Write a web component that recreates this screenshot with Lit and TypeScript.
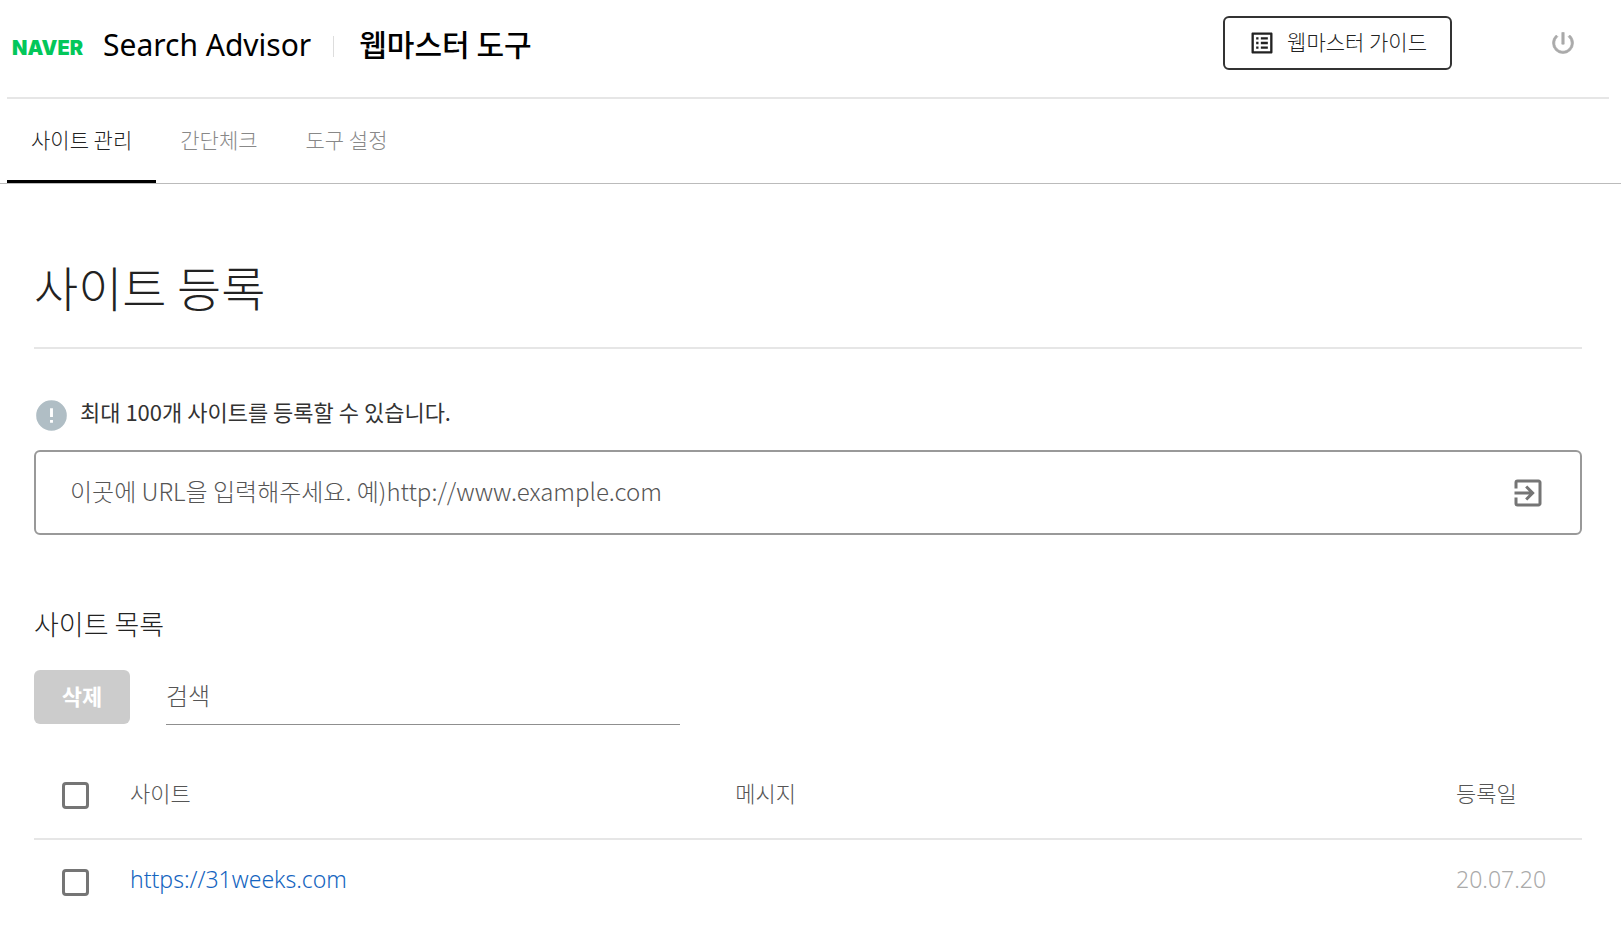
import { LitElement, html, css } from "lit";
import { customElement, state } from "lit/decorators.js";

interface Site {
  url: string;
  message: string;
  date: string;
}

@customElement("app-root")
export class AppRoot extends LitElement {
  static styles = css`
    :host {
      display: block;
      min-height: 100vh;
      background: #fff;
      color: #222;
      font-family: "Noto Sans CJK KR", "Noto Sans", sans-serif;
      font-weight: 300;
      font-size: 22px;
      line-height: 32px;
    }
    * { box-sizing: border-box; }
    button, input { font: inherit; color: inherit; margin: 0; }
    button { cursor: pointer; }
    svg { display: block; fill: currentColor; flex: none; }
    .header {
      display: flex;
      align-items: center;
      height: 99px;
      margin: 0 12px 0 7px;
      padding: 0 32px 12px 5px;
      border-bottom: 2px solid #e6e6e6;
    }
    .brand { display: flex; align-items: center; padding-top: 4px; color: #000; text-decoration: none; }
    .naver {
      width: 91px;
      padding-top: 6px;
      font-family: Inter, sans-serif;
      font-weight: 900;
      font-size: 20px;
      line-height: 24px;
      color: #03c75a;
    }
    .product {
      font-family: "Noto Sans", sans-serif;
      font-weight: 400;
      font-size: 30px;
      line-height: 40px;
    }
    .divider { width: 1px; height: 21px; margin: 8px 25px 0 22px; background: #ddd; }
    .tool { font-weight: 500; font-size: 30px; line-height: 40px; color: #000; }
    .guide {
      display: flex;
      align-items: center;
      gap: 11px;
      height: 54px;
      margin-left: auto;
      padding: 0 23px;
      border: 2px solid #333;
      border-radius: 6px;
      background: #fff;
      font-size: 21px;
    }
    .guide span { padding-bottom: 4px; }
    .power { margin-left: 97px; padding: 0; border: 0; background: none; color: #aaa; }
    .power svg { stroke: currentColor; stroke-width: .6; }
    .tabs {
      display: flex;
      padding-left: 7px;
      border-bottom: 1px solid #bbb;
    }
    .tab {
      height: 84px;
      padding: 24px 24px 0;
      border-bottom: 3px solid transparent;
      color: #888;
      text-decoration: none;
      font-size: 21px;
    }
    .tab.active { color: #222; border-color: #000; }
    .main { padding: 67px 39px 24px 34px; }
    .title {
      margin: 0;
      padding-bottom: 26px;
      border-bottom: 2px solid #e6e6e6;
      font-weight: 300;
      font-size: 48px;
      line-height: 70px;
    }
    .notice {
      display: flex;
      align-items: center;
      gap: 11px;
      margin: 46px 0 15px;
      color: #333;
      font-weight: 400;
    }
    .notice span { padding-bottom: 8px; }
    .notice svg { color: #b0bec5; }
    .field {
      display: flex;
      align-items: center;
      height: 85px;
      padding: 0 34px;
      border: 2px solid #999;
      border-radius: 6px;
    }
    .field input, .search input {
      flex: 1;
      min-width: 0;
      padding: 0 0 4px;
      border: 0;
      outline: 0;
      background: none;
      font-size: 24px;
    }
    ::placeholder { color: #555; opacity: 1; }
    .submit { padding: 0; border: 0; background: none; color: #757575; }
    .subtitle { margin: 69px 0 26px; font-weight: 300; font-size: 27px; line-height: 40px; }
    .toolbar { display: flex; gap: 36px; }
    .delete {
      width: 96px;
      height: 54px;
      padding: 0 0 4px;
      border: 0;
      border-radius: 6px;
      background: #ccc;
      color: #fff;
      font-weight: 700;
    }
    .search {
      display: flex;
      width: 33.2%;
      height: 55px;
      border-bottom: 1px solid #8f8f8f;
    }
    .table {
      width: 100%;
      margin-top: 28px;
      border-collapse: collapse;
      table-layout: fixed;
    }
    .table th, .table td {
      height: 86px;
      padding: 0 22px 8px;
      text-align: left;
      font-weight: 300;
    }
    .table th { color: #555; border-bottom: 2px solid #e6e6e6; }
    .col-check { width: 74px; }
    .col-site { width: 39.1%; }
    .col-date { width: 148px; }
    .table .check { padding: 0 0 0 28px; }
    .box {
      display: block;
      appearance: none;
      width: 27px;
      height: 27px;
      border: 3px solid #757575;
      border-radius: 4px;
    }
    .box:checked { background: #757575; }
    .link, .table .date { font-family: "Noto Sans", sans-serif; font-size: 23px; }
    .link { color: #1565c0; text-decoration: none; }
    .table .date { color: #aaa; }
  `;

  @state() private tab = 0;

  private tabs = ["사이트 관리", "간단체크", "도구 설정"];
  private sites: Site[] = [{ url: "https://31weeks.com", message: "", date: "20.07.20" }];

  private select(e: Event, index: number) {
    e.preventDefault();
    this.tab = index;
  }

  render() {
    return html`
      <header class="header">
        <a class="brand" href="#">
          <span class="naver">NAVER</span>
          <span class="product">Search Advisor</span>
        </a>
        <span class="divider"></span>
        <span class="tool">웹마스터 도구</span>
        <button class="guide" type="button">
          <svg width="28" height="28" viewBox="0 0 24 24" aria-hidden="true">
            <path d="M19 5v14H5V5h14m1.100-2H3.900c-.5 0-.9.4-.9.900v16.200c0 .4.400.9.900.9h16.200c.4 0 .9-.5.900-.9V3.900c0-.5-.5-.9-.9-.9zM11 7h6v2h-6V7zm0 4h6v2h-6v-2zm0 4h6v2h-6v-2zM7 7h2v2H7zm0 4h2v2H7zm0 4h2v2H7z" />
          </svg>
          <span>웹마스터 가이드</span>
        </button>
        <button class="power" type="button" aria-label="로그아웃">
          <svg width="28" height="28" viewBox="0 0 24 24">
            <path d="M13 3h-2v10h2V3zm4.830 2.170l-1.420 1.420A6.920 6.920 0 0 1 19 12c0 3.870-3.130 7-7 7s-7-3.130-7-7c0-2.190 1.010-4.140 2.580-5.420L6.170 5.170A8.932 8.932 0 0 0 3 12a9 9 0 0 0 18 0c0-2.740-1.230-5.180-3.170-6.830z" />
          </svg>
        </button>
      </header>
      <nav class="tabs">
        ${this.tabs.map(
          (label, i) => html`<a
            class="tab ${i === this.tab ? "active" : ""}"
            href="#"
            @click=${(e: Event) => this.select(e, i)}
            >${label}</a>`
        )}
      </nav>
      <main class="main">
        <h1 class="title">사이트 등록</h1>
        <p class="notice">
          <svg width="35" height="35" viewBox="0 0 24 24" aria-hidden="true">
            <path d="M12 1.500a10.500 10.500 0 1 0 0 21 10.500 10.500 0 0 0 0-21zM13 17h-2v-2h2v2zm0-4h-2V7h2v6z" />
          </svg>
          <span>최대 100개 사이트를 등록할 수 있습니다.</span>
        </p>
        <form class="field" @submit=${(e: Event) => e.preventDefault()}>
          <input type="text" aria-label="사이트 URL" placeholder="이곳에 URL을 입력해주세요. 예)http://www.example.com" />
          <button class="submit" type="submit" aria-label="등록">
            <svg width="36" height="36" viewBox="0 0 24 24">
              <path d="M10.090 15.590L11.500 17l5-5-5-5-1.410 1.410L12.670 11H3v2h9.670l-2.580 2.590zM19 3H5a2 2 0 0 0-2 2v4h2V5h14v14H5v-4H3v4a2 2 0 0 0 2 2h14c1.100 0 2-.9 2-2V5c0-1.100-.9-2-2-2z" />
            </svg>
          </button>
        </form>
        <h2 class="subtitle">사이트 목록</h2>
        <div class="toolbar">
          <button class="delete" type="button">삭제</button>
          <label class="search"><input type="text" aria-label="검색" placeholder="검색" /></label>
        </div>
        <table class="table">
          <colgroup>
            <col class="col-check" />
            <col class="col-site" />
            <col />
            <col class="col-date" />
          </colgroup>
          <thead>
            <tr>
              <th class="check"><input class="box" type="checkbox" aria-label="전체 선택" /></th>
              <th scope="col">사이트</th>
              <th scope="col">메시지</th>
              <th scope="col">등록일</th>
            </tr>
          </thead>
          <tbody>
            ${this.sites.map(
              (s) => html`<tr>
                <td class="check"><input class="box" type="checkbox" aria-label=${s.url} /></td>
                <td><a class="link" href=${s.url}>${s.url}</a></td>
                <td>${s.message}</td>
                <td class="date">${s.date}</td>
              </tr>`
            )}
          </tbody>
        </table>
      </main>
    `;
  }
}
